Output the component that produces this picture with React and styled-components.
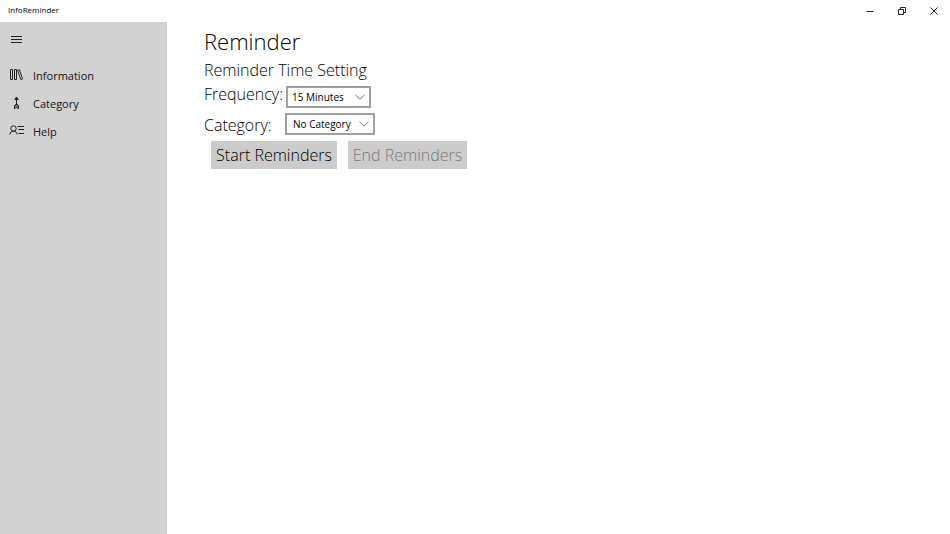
import React, { useState } from 'react';
import styled, { createGlobalStyle } from 'styled-components';

const GlobalStyle = createGlobalStyle`
* {
  box-sizing: border-box;
}
body {
  margin: 0;
  background: #fff;
  color: #000;
  font-family: 'Open Sans', 'Noto Sans', sans-serif;
}
`;

const Window = styled.div`
display: flex;
flex-direction: column;
min-height: 100vh;
`;

const TitleBar = styled.header`
display: flex;
align-items: center;
justify-content: space-between;
height: 22px;
padding-left: 8px;
font-size: 8px;
line-height: 10px;
`;

const AppName = styled.span`
padding-bottom: 2px;
`;

const WindowButtons = styled.div`
display: flex;
`;

const WindowButton = styled.button`
display: flex;
align-items: center;
justify-content: center;
width: 32px;
height: 22px;
padding: 0;
border: 0;
background: none;
color: #222;
`;

const Body = styled.div`
display: flex;
flex: 1;
`;

const Sidebar = styled.nav`
flex: none;
width: 167px;
background: #d2d2d2;
`;

const MenuButton = styled.button`
display: flex;
align-items: center;
width: 32px;
height: 36px;
margin-bottom: 3px;
padding: 0 0 0 10px;
border: 0;
background: none;
color: #222;
`;

const NavLink = styled.a`
display: flex;
align-items: center;
gap: 9px;
height: 28px;
padding-left: 9px;
color: #111;
font-size: 11px;
text-decoration: none;
`;

const Main = styled.main`
flex: 1;
padding: 2px 0 0 37px;
font-weight: 300;
`;

const Title = styled.h1`
margin: 0;
font-size: 22px;
font-weight: 300;
line-height: 34px;
`;

const Subtitle = styled.h2`
margin: 0;
font-size: 16px;
font-weight: 300;
line-height: 24px;
`;

const Field = styled.div`
display: flex;
height: ${({ $height }) => $height}px;
margin-bottom: 5px;
`;

const Label = styled.label`
width: ${({ $width }) => $width}px;
font-size: 16px;
line-height: 24px;
white-space: nowrap;
`;

const SelectBox = styled.div`
position: relative;
align-self: flex-end;
width: ${({ $width }) => $width}px;
height: 22px;
`;

const Select = styled.select`
appearance: none;
display: block;
width: 100%;
height: 22px;
padding: 0 0 0 ${({ $indent }) => $indent}px;
border: 2px solid #a0a0a0;
border-radius: 0;
background: #fff;
color: #000;
font-family: inherit;
font-size: 10px;
`;

const Chevron = styled.svg`
position: absolute;
top: 8px;
right: 6px;
pointer-events: none;
`;

const Actions = styled.div`
display: flex;
gap: 11px;
padding: 1px 0 0 7px;
`;

const ActionButton = styled.button`
width: ${({ $width }) => $width}px;
height: 28px;
padding: 0;
border: 0;
background: #ccc;
color: #000;
font-family: inherit;
font-size: 16px;
font-weight: 300;
white-space: nowrap;

&:disabled {
  color: #7a7a7a;
}
`;

function LibraryIcon() {
  return (
    <svg width='15' height='14' viewBox='0 0 15 14' fill='none' stroke='#222' aria-hidden='true'>
      <path d='M1.5 1.5h2v10h-2zM5.5 1.5h2v10h-2z' />
      <path d='M8.6 2.3l1.8-.6 3.2 9.2-1.8.7z' />
    </svg>
  );
}

function CategoryIcon() {
  return (
    <svg width='15' height='14' viewBox='0 0 15 14' fill='none' stroke='#222' aria-hidden='true'>
      <path d='M7.5 1v8M5.7 3.500l1.8-2.500 1.8 2.500z' />
      <path d='M7.5 7.500L5.500 10v3l2-2 2 2v-3zM5.500 10h4' />
    </svg>
  );
}

function HelpIcon() {
  return (
    <svg width='15' height='14' viewBox='0 0 15 14' fill='none' stroke='#222' aria-hidden='true'>
      <circle cx='4.5' cy='4.5' r='2.7' />
      <path d='M.8 10.500c.3-2.200 1.700-3.300 3.700-3.300s3.400 1.100 3.700 3.300M8.500 2.500H15M9.500 5.500H15M9.500 9.500H15' />
    </svg>
  );
}

const links = [
  { name: 'Information', Icon: LibraryIcon },
  { name: 'Category', Icon: CategoryIcon },
  { name: 'Help', Icon: HelpIcon }
];

function Dropdown({ id, width, indent, options }) {
  const [value, setValue] = useState(options[0]);

  return (
    <SelectBox $width={width}>
      <Select id={id} $indent={indent} value={value} onChange={(e) => setValue(e.target.value)}>
        {options.map((option) => <option key={option}>{option}</option>)}
      </Select>
      <Chevron width='10' height='6' viewBox='0 0 10 6' fill='none' stroke='#777' aria-hidden='true'>
        <path d='M.5 .8L5 5.200 9.500 .8' />
      </Chevron>
    </SelectBox>
  );
}

export default function App() {
  const [running, setRunning] = useState(false);

  return (
    <Window>
      <GlobalStyle />
      <TitleBar>
        <AppName>InfoReminder</AppName>
        <WindowButtons>
          <WindowButton type='button' aria-label='Minimize'>
            <svg width='8' height='8' viewBox='0 0 8 8' stroke='currentColor'>
              <path d='M.5 4.500h7' />
            </svg>
          </WindowButton>
          <WindowButton type='button' aria-label='Restore'>
            <svg width='8' height='8' viewBox='0 0 8 8' fill='none' stroke='currentColor'>
              <path d='M.5 2.500h5v5h-5zM2.500 2.500v-2h5v5h-2' />
            </svg>
          </WindowButton>
          <WindowButton type='button' aria-label='Close'>
            <svg width='8' height='8' viewBox='0 0 8 8' stroke='currentColor'>
              <path d='M.5 .5l7 7M7.500 .5l-7 7' />
            </svg>
          </WindowButton>
        </WindowButtons>
      </TitleBar>
      <Body>
        <Sidebar>
          <MenuButton type='button' aria-label='Menu'>
            <svg width='13' height='8' viewBox='0 0 13 8' stroke='currentColor'>
              <path d='M1 .5h11M1 3.500h11M1 6.500h11' />
            </svg>
          </MenuButton>
          {links.map(({ name, Icon }) => (
            <NavLink key={name} href={`#${name.toLowerCase()}`}>
              <Icon />
              {name}
            </NavLink>
          ))}
        </Sidebar>
        <Main>
          <Title>Reminder</Title>
          <Subtitle>Reminder Time Setting</Subtitle>
          <Field $height={26}>
            <Label htmlFor='frequency' $width={82}>Frequency:</Label>
            <Dropdown id='frequency' width={85} indent={4} options={['15 Minutes', '30 Minutes', '60 Minutes']} />
          </Field>
          <Field $height={22}>
            <Label htmlFor='category' $width={81}>Category:</Label>
            <Dropdown id='category' width={90} indent={6} options={['No Category']} />
          </Field>
          <Actions>
            <ActionButton type='button' $width={126} disabled={running} onClick={() => setRunning(true)}>
              Start Reminders
            </ActionButton>
            <ActionButton type='button' $width={119} disabled={!running} onClick={() => setRunning(false)}>
              End Reminders
            </ActionButton>
          </Actions>
        </Main>
      </Body>
    </Window>
  );
}
